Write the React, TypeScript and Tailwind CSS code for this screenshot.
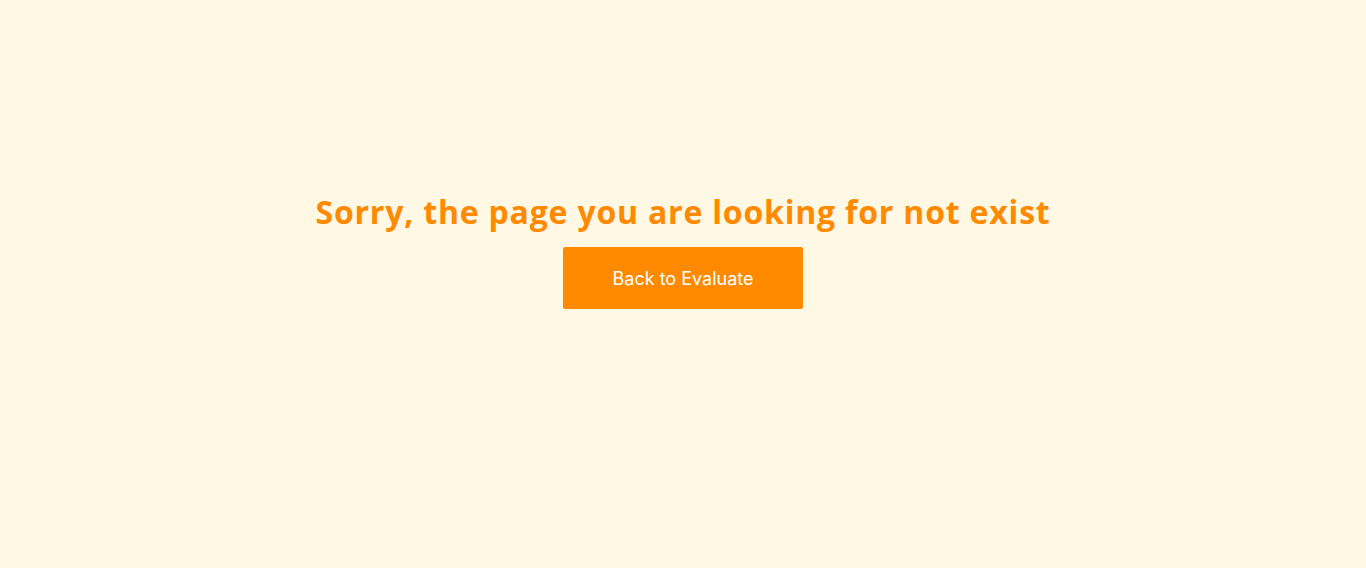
import React from 'react';

const App = () => {
  return (
    <div className="min-h-[568px] w-full bg-[#fff8e5] flex flex-col items-center pt-[190px]">
      <h1 className="font-['Open_Sans',sans-serif] font-bold text-[32px] leading-[44px] text-[#ff8a00] tracking-[0.8px]">
        Sorry, the page you are looking for not exist
      </h1>
      <button className="mt-[13px] w-[240px] h-[62px] bg-[#ff8a00] rounded-[2px] text-white text-[18px] font-['Inter',sans-serif]">
        Back to Evaluate
      </button>
    </div>
  );
};

export default App;
